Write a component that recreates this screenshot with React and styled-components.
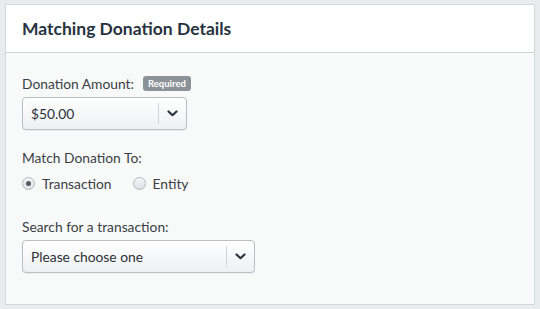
import React, { useState } from 'react';
import styled, { createGlobalStyle } from 'styled-components';

const GlobalStyle = createGlobalStyle`
  html, body {
    margin: 0;
    padding: 0;
    background: #e9ecec;
    font-family: Lato, "Open Sans", Arial, sans-serif;
  }
`;

const Page = styled.div`
  padding: 4px 5px 4px 5px;
  width: 540px;
  height: 309px;
  box-sizing: border-box;
`;

const Card = styled.section`
  border: 1px solid #d3d8db;
  background: #f8f9f9;
  height: 100%;
  box-sizing: border-box;
`;

const Header = styled.header`
  height: 47px;
  display: flex;
  align-items: center;
  padding: 0 16px;
  background: #ffffff;
  border-bottom: 1px solid #d3d8db;
`;

const Title = styled.h2`
  margin: 0;
  font-size: 17.5px;
  font-weight: 700;
  color: #28333f;
`;

const Body = styled.div`
  padding: 22px 16px;
  display: flex;
  flex-direction: column;
`;

const Field = styled.div`
  display: flex;
  flex-direction: column;
  align-items: flex-start;
  gap: ${p => p.gap || 5}px;
  margin-bottom: ${p => p.spacing || 0}px;
`;

const LabelRow = styled.div`
  display: flex;
  align-items: center;
  gap: 9px;
`;

const Label = styled.label`
  font-size: 13.8px;
  color: #3a3f45;
`;

const Badge = styled.span`
  background: #8b9299;
  color: #ffffff;
  font-size: 9.5px;
  font-weight: 700;
  padding: 2px 5px;
  border-radius: 3px;
  line-height: 11px;
`;

const SelectBox = styled.div`
  width: ${p => p.width}px;
  height: 33px;
  box-sizing: border-box;
  border: 1px solid #b9bfc4;
  border-radius: 4px;
  background: linear-gradient(#ffffff, #eef0f2);
  display: flex;
  align-items: center;
  box-shadow: 0 1px 1px rgba(0, 0, 0, 0.06);
`;

const SelectValue = styled.span`
  flex: 1;
  padding-left: 8px;
  font-size: 13.8px;
  color: #2b3138;
`;

const Caret = styled.span`
  width: 27px;
  height: 21px;
  border-left: 1px solid #cfd4d8;
  display: flex;
  align-items: center;
  justify-content: center;
`;

const RadioRow = styled.div`
  display: flex;
  align-items: center;
  gap: 21px;
  padding-top: 4px;
`;

const RadioOption = styled.label`
  display: flex;
  align-items: center;
  gap: 7px;
  font-size: 13.8px;
  color: #3a3f45;
  cursor: pointer;
`;

const RadioDot = styled.span`
  width: 11px;
  height: 11px;
  border-radius: 50%;
  border: 1px solid #b3b8bd;
  background: linear-gradient(#f4f5f6, #dfe2e5);
  display: flex;
  align-items: center;
  justify-content: center;
  &::after {
    content: '';
    width: 5px;
    height: 5px;
    border-radius: 50%;
    background: ${p => (p.checked ? '#555b61' : 'transparent')};
  }
`;

function Chevron() {
  return (
    <svg width="11" height="7" viewBox="0 0 11 7">
      <path d="M1.5 1.5 L5.5 5.2 L9.5 1.5" fill="none" stroke="#2b3540" strokeWidth="2.2" strokeLinecap="round" strokeLinejoin="round" />
    </svg>
  );
}

function Select({ value, width }) {
  return (
    <SelectBox width={width}>
      <SelectValue>{value}</SelectValue>
      <Caret><Chevron /></Caret>
    </SelectBox>
  );
}

export default function App() {
  const [target, setTarget] = useState('transaction');

  return (
    <Page>
      <GlobalStyle />
      <Card>
        <Header>
          <Title>Matching Donation Details</Title>
        </Header>
        <Body>
          <Field spacing={19}>
            <LabelRow>
              <Label>Donation Amount:</Label>
              <Badge>Required</Badge>
            </LabelRow>
            <Select value="$50.00" width={165} />
          </Field>
          <Field spacing={26} gap={5}>
            <Label>Match Donation To:</Label>
            <RadioRow>
              <RadioOption onClick={() => setTarget('transaction')}>
                <RadioDot checked={target === 'transaction'} />
                Transaction
              </RadioOption>
              <RadioOption onClick={() => setTarget('entity')}>
                <RadioDot checked={target === 'entity'} />
                Entity
              </RadioOption>
            </RadioRow>
          </Field>
          <Field>
            <Label>Search for a transaction:</Label>
            <Select value="Please choose one" width={233} />
          </Field>
        </Body>
      </Card>
    </Page>
  );
}
